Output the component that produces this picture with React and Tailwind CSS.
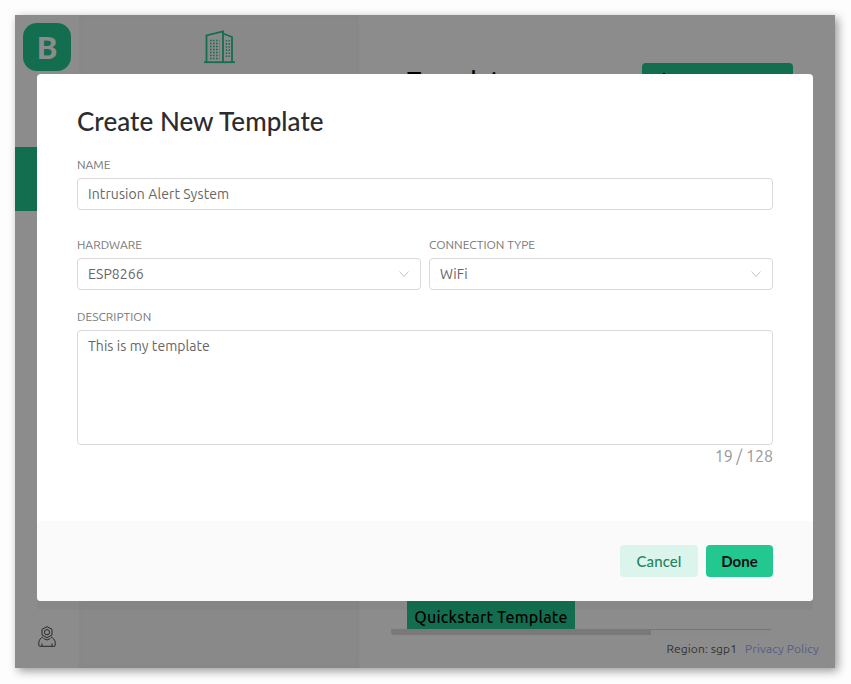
import React from "react";

const body = "font-['Ubuntu','Noto_Sans','Open_Sans',sans-serif]";

function Chevron() {
  return (
    <svg width="10" height="6" viewBox="0 0 10 6" fill="none" stroke="#c4c4c4" strokeWidth="1">
      <path d="M0.4 0.5 L5 5.4 L9.6 0.5" />
    </svg>
  );
}

function Plus() {
  return (
    <svg width="20" height="20" viewBox="0 0 20 20" fill="none" stroke="#000" strokeWidth="2">
      <path d="M10 0 V20 M0 10 H20" />
    </svg>
  );
}

function Building() {
  return (
    <svg width="31" height="34" viewBox="0 0 31 34" fill="none" stroke="#23c890" strokeWidth="1.8">
      <path d="M0 32.2 H31" />
      <path d="M2.5 32 V5.5 L19 1.5 V32" />
      <path d="M19 3.5 L28 7 V32" />
      <path
        d="M6 10.5 H15.5 M6 13.5 H15.5 M6 16.5 H15.5 M6 19.5 H15.5 M6 22.5 H15.5 M6 25.5 H15.5 M6 28.5 H15.5"
        strokeDasharray="1.6 1.4"
        strokeWidth="1.6"
      />
      <path d="M22.5 10 V28.5 M25.2 10 V28.5" strokeDasharray="1.6 1.5" strokeWidth="1.4" />
    </svg>
  );
}

function Person() {
  return (
    <svg width="18" height="21" viewBox="0 0 18 21" fill="none" stroke="#4a4a4a" strokeWidth="1">
      <path d="M9 0.7 L14 3.3 V9 L9 11.7 L4 9 V3.3 Z" />
      <circle cx="9" cy="6.2" r="2.6" />
      <path d="M5 11 C2.5 12 1 14 0.8 16.5 V19.5 Q0.8 20.3 1.6 20.3 H16.4 Q17.2 20.3 17.2 19.5 V16.5 C17 14 15.5 12 13 11" />
      <path d="M5.5 12.5 Q9 15.5 12.5 12.5" />
      <path d="M4 17.5 V20 M14 17.5 V20" />
    </svg>
  );
}

function Field({ label, children, className = "" }) {
  return (
    <div className={className}>
      <div className="h-[13px] text-[12px] leading-[13px] text-[#777] uppercase">{label}</div>
      {children}
    </div>
  );
}

function SelectBox({ value }) {
  return (
    <div className="mt-[7px] flex h-8 items-center justify-between rounded border border-[#d9d9d9] bg-white pl-[10px] pr-[11px] text-[14px] tracking-[0.1px] text-[#666]">
      <span>{value}</span>
      <Chevron />
    </div>
  );
}

export default function App() {
  return (
    <div className={`h-[684px] w-[851px] overflow-hidden bg-[#fdfdfd] p-[15px] ${body}`}>
      <div className="relative flex h-[653px] w-[820px] overflow-hidden bg-white shadow-[3px_3px_9px_rgba(0,0,0,0.4)]">
        {/* sidebar */}
        <div className="flex w-16 shrink-0 flex-col">
          <div className="ml-2 mt-2 flex h-12 w-12 items-center justify-center rounded-[14px] bg-[#23c890] font-['Lato',sans-serif] text-[31px] font-black text-white">
            B
          </div>
          <div className="mt-[76px] h-16 w-16 bg-[#23c890]" />
          <div className="mt-auto mb-[21px] flex justify-center">
            <Person />
          </div>
        </div>
        {/* panel */}
        <div className="flex w-[280px] shrink-0 justify-center bg-[#fafafa] pt-[15px] shadow-[inset_0_0_10px_rgba(0,0,0,0.03)]">
          <Building />
        </div>
        {/* main */}
        <div className="flex min-w-0 flex-1 flex-col pl-8">
          <div className="mt-[48px] flex justify-between pl-4 pr-[42px]">
            <div className="text-[25px] font-medium leading-[34px] text-black">Templates</div>
            <div className="flex h-[40px] w-[151px] items-center gap-2 rounded bg-[#23c890] pl-3 text-[14px] text-black">
              <Plus />
              New Template
            </div>
          </div>
          <div className="mt-auto pl-4">
            <div className="flex h-7 w-[168px] items-center justify-center bg-[#23c890] pt-[3px] text-[16px] font-medium tracking-[0.2px] text-black">
              Quickstart Template
            </div>
          </div>
          <div className="mr-[64px] h-[6px] border-t border-[#d8d8d8] bg-[#fdfdfd]">
            <div className="-mt-px h-[6px] w-[260px] rounded-l-full bg-[#dcdcdc]" />
          </div>
          <div className="mb-[11px] mt-[6px] flex justify-end gap-2 pr-[16px] text-[12px] leading-[16px] tracking-[0.1px]">
            <span className="text-[#5c5c5c]">Region: sgp1</span>
            <span className="text-[#9aa9f5]">Privacy Policy</span>
          </div>
        </div>

        {/* overlay + modal */}
        <div className="absolute inset-0 bg-black/45 px-[22px] pt-[59px]">
          <div className="h-[527px] overflow-hidden rounded bg-white shadow-[0_9px_0_0_rgba(0,0,0,0.025)]">
            <div className="h-[447px] px-10 pt-[31px]">
              <h2 className="font-['Lato',sans-serif] text-[26px] font-medium leading-[32px] tracking-[0.05px] text-[#2c2c2e]">
                Create New Template
              </h2>
              <Field label="Name" className="mt-[21px]">
                <div className="mt-[7px] flex h-8 items-center rounded border border-[#d9d9d9] bg-white px-[10px] text-[14px] tracking-[0.1px] text-[#666]">
                  Intrusion Alert System
                </div>
              </Field>
              <div className="mt-[28px] flex gap-2">
                <Field label="Hardware" className="flex-1">
                  <SelectBox value="ESP8266" />
                </Field>
                <Field label="Connection Type" className="flex-1">
                  <SelectBox value="WiFi" />
                </Field>
              </div>
              <Field label="Description" className="mt-[20px]">
                <div className="mt-[7px] h-[115px] rounded border border-[#d9d9d9] bg-white px-[10px] pt-[4px] text-[14px] leading-[22px] tracking-[0.06px] text-[#666]">
                  This is my template
                </div>
              </Field>
              <div className="mt-[1px] text-right text-[16px] leading-[20px] text-[#999]">19 / 128</div>
            </div>
            <div className="flex h-20 items-start justify-end gap-2 bg-[#fafafa] px-10 pt-6 font-['Lato',sans-serif]">
              <div className="flex h-8 w-[78px] items-center justify-center rounded bg-[#dcf5ec] text-[15px] font-medium tracking-[0.1px] text-[#24835f]">
                Cancel
              </div>
              <div className="flex h-8 w-[67px] items-center justify-center rounded bg-[#23c890] text-[15px] font-bold text-[#111]">
                Done
              </div>
            </div>
          </div>
        </div>
      </div>
    </div>
  );
}
